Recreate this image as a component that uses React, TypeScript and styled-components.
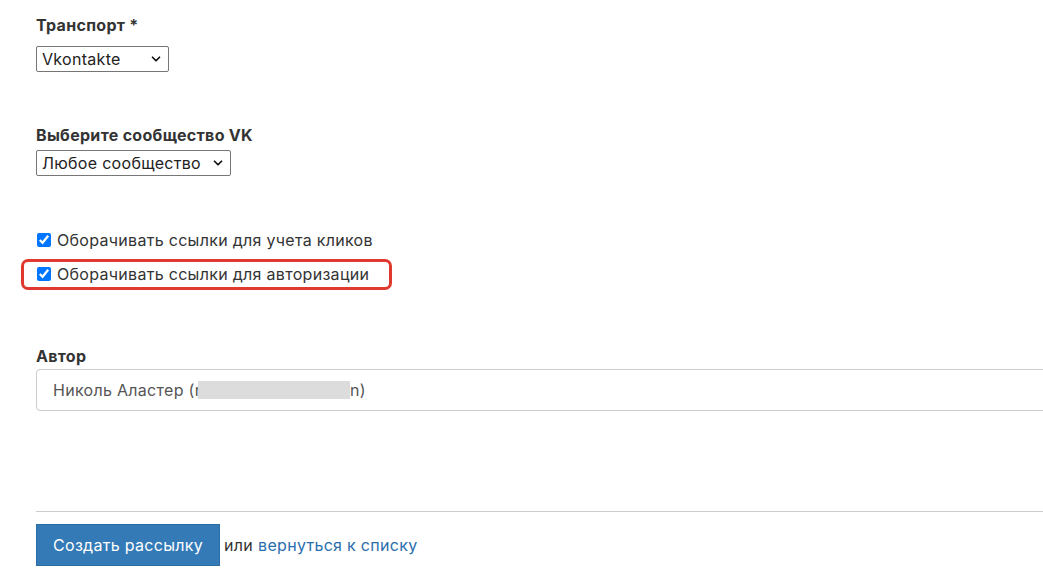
import styled, { createGlobalStyle } from 'styled-components';
import { ChevronDown } from 'lucide-react';

const GlobalStyle = createGlobalStyle`
  html, body {
    margin: 0;
    padding: 0;
    background: #fff;
  }
  body {
    font-family: Inter, "Noto Sans", sans-serif;
    letter-spacing: 0.3px;
    color: #333;
  }
`;

export default function App() {
  return (
    <>
      <GlobalStyle />
      <Form>
        <Field>
          <Label>Транспорт *</Label>
          <SelectWrap $gap={10}>
            <Select defaultValue="vk" $width={133}>
              <option value="vk">Vkontakte</option>
            </Select>
            <Arrow size={14} strokeWidth={3} />
          </SelectWrap>
        </Field>

        <Field $top={52}>
          <Label>Выберите сообщество VK</Label>
          <SelectWrap $gap={4}>
            <Select defaultValue="any" $width={195}>
              <option value="any">Любое сообщество</option>
            </Select>
            <Arrow size={14} strokeWidth={3} />
          </SelectWrap>
        </Field>

        <Checks>
          <CheckRow>
            <Checkbox type="checkbox" defaultChecked />
            Оборачивать ссылки для учета кликов
          </CheckRow>
          <Highlight>
            <CheckRow>
              <Checkbox type="checkbox" defaultChecked />
              Оборачивать ссылки для авторизации
            </CheckRow>
          </Highlight>
        </Checks>

        <Field $top={55}>
          <Label>Автор</Label>
          <AuthorInput>
            Николь Аластер (r<Blurred />n)
          </AuthorInput>
        </Field>

        <Divider />

        <Actions>
          <SubmitButton type="button">Создать рассылку</SubmitButton>
          <Or>или</Or>
          <BackLink href="#">вернуться к списку</BackLink>
        </Actions>
      </Form>
    </>
  );
}

const Form = styled.div`
  padding: 14px 0 21px 36px;
  overflow: hidden;
`;

const Field = styled.div<{ $top?: number }>`
  display: flex;
  flex-direction: column;
  align-items: flex-start;
  margin-top: ${(p) => p.$top ?? 0}px;
`;

const Label = styled.label`
  font-size: 16px;
  font-weight: 700;
  line-height: 22px;
  color: #333;
`;

const SelectWrap = styled.div<{ $gap: number }>`
  position: relative;
  display: inline-flex;
  margin-top: ${(p) => p.$gap}px;
`;

const Select = styled.select<{ $width: number }>`
  appearance: none;
  width: ${(p) => p.$width}px;
  height: 26px;
  font-family: Inter, "Noto Sans", sans-serif;
  letter-spacing: 0.3px;
  font-size: 16px;
  color: #222;
  padding: 0 20px 0 5px;
  border: 1px solid #767676;
  border-radius: 2px;
  background: #fff;
`;

const Arrow = styled(ChevronDown)`
  position: absolute;
  right: 6px;
  top: 6px;
  color: #111;
  pointer-events: none;
`;

const Checks = styled.div`
  margin-top: 53px;
  display: flex;
  flex-direction: column;
  align-items: flex-start;
  gap: 8px;
`;

const CheckRow = styled.label`
  display: flex;
  align-items: center;
  height: 22px;
  font-size: 16px;
  color: #333;
  gap: 6px;
`;

const Checkbox = styled.input`
  width: 14px;
  height: 14px;
  margin: 0 0 0 1px;
  accent-color: #0075ff;
`;

const Highlight = styled.div`
  margin-left: -15px;
  border: 3px solid #e0392f;
  border-radius: 7px;
  padding: 1px 20px 2px 12px;
`;

const AuthorInput = styled.div`
  margin-top: 2px;
  box-sizing: border-box;
  width: calc(100% + 20px);
  height: 42px;
  display: flex;
  align-items: center;
  padding-left: 16px;
  border: 1px solid #ccc;
  border-radius: 4px;
  font-size: 16px;
  color: #555;
`;

const Blurred = styled.span`
  display: inline-block;
  width: 152px;
  height: 18px;
  background: #dcdcdc;
  margin-left: -3px;
`;

const Divider = styled.hr`
  margin: 100px -20px 0 0;
  border: 0;
  border-top: 1px solid #ccc;
`;

const Actions = styled.div`
  margin-top: 12px;
  display: flex;
  align-items: center;
  font-size: 16px;
`;

const SubmitButton = styled.button`
  height: 42px;
  padding: 0 16px;
  border: 1px solid #2e6da4;
  background: #337ab7;
  color: #fff;
  font-family: Inter, "Noto Sans", sans-serif;
  letter-spacing: 0.3px;
  font-size: 16px;
  border-radius: 0;
`;

const Or = styled.span`
  margin-left: 4px;
  color: #333;
`;

const BackLink = styled.a`
  margin-left: 5px;
  color: #2a6ead;
  text-decoration: none;
`;
